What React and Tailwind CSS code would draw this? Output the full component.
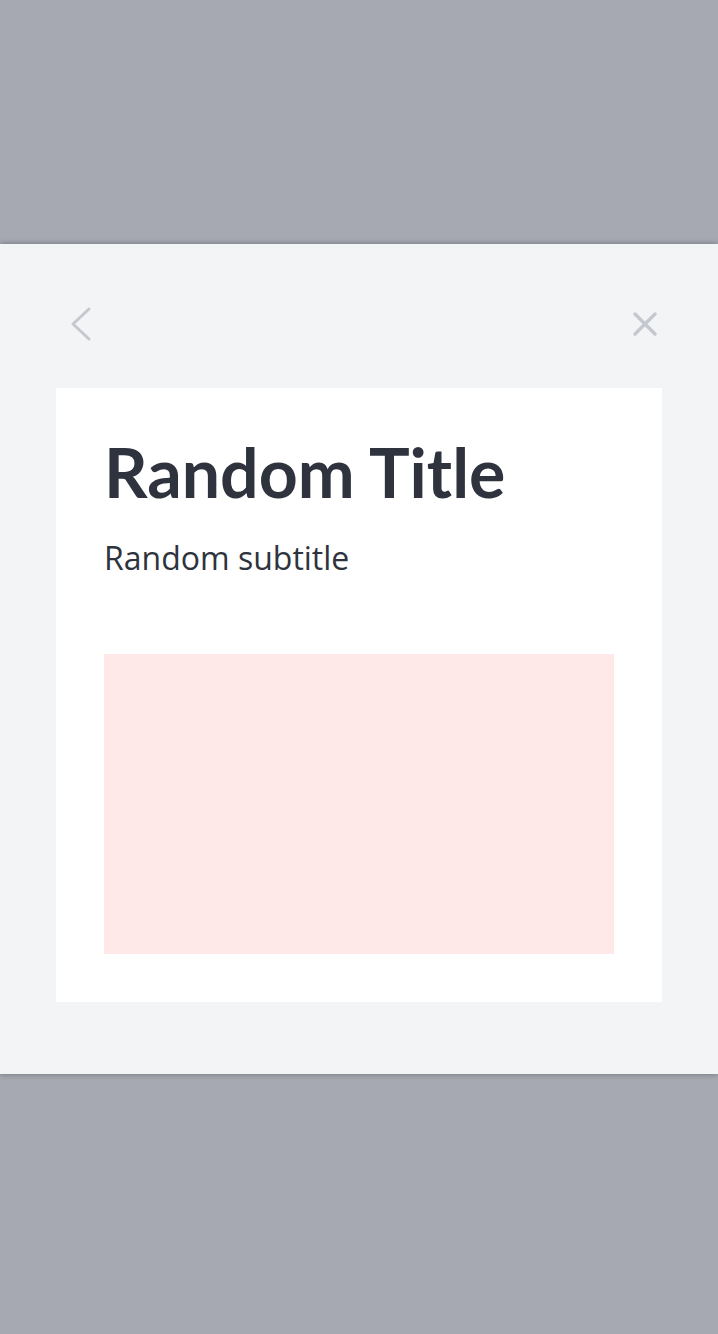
export default function App() {
  return (
    <div className="min-h-[1334px] bg-[#a6a9b1] pt-[244px]">
      <div className="bg-[#f3f4f6] px-14 pt-14 pb-[72px] shadow-[0_0_6px_rgba(0,0,0,0.35)]">
        {/* Header */}
        <div className="flex h-12 items-center justify-between">
          <button className="h-12 w-12">
            <svg width="48" height="48" viewBox="0 0 48 48" fill="none">
              <path d="M33 9 L17 24 L33 39" stroke="#c5c8cf" strokeWidth="3" strokeLinecap="round" strokeLinejoin="round" />
            </svg>
          </button>
          <button className="h-12 w-12">
            <svg width="48" height="48" viewBox="0 0 48 48" fill="none">
              <path d="M21 14 L41 34 M41 14 L21 34" stroke="#c5c8cf" strokeWidth="3.5" strokeLinecap="round" />
            </svg>
          </button>
        </div>

        {/* Card */}
        <div className="mt-10 bg-white p-12">
          <h1 className="font-['Lato',sans-serif] text-[68px] leading-[72px] font-bold text-[#2e333d]">
            Random Title
          </h1>
          <p className="mt-7 font-['Open_Sans',sans-serif] text-[32px] leading-[44px] text-[#2e333d]">
            Random subtitle
          </p>
          <div className="mt-[74px] h-[300px] bg-[#ffe8e8]" />
        </div>
      </div>
    </div>
  );
}
